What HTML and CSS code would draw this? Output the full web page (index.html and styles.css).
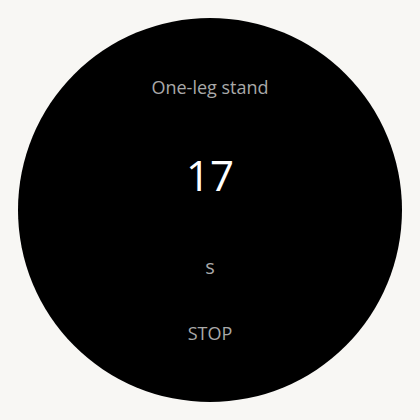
FILE: index.html
```html
<!DOCTYPE html>
<html>
<head>
<meta charset="utf-8">
<link rel="stylesheet" href="styles.css">
</head>
<body>
<div class="screen">
  <div class="watch">
    <div class="title">One-leg stand</div>
    <div class="value">17</div>
    <div class="unit">s</div>
    <div class="action">STOP</div>
  </div>
</div>
</body>
</html>
```
FILE: styles.css
```css
html, body {
  margin: 0;
  padding: 0;
  background: #f8f7f4;
}
.screen {
  width: 420px;
  height: 420px;
  display: flex;
  align-items: center;
  justify-content: center;
}
.watch {
  width: 384px;
  height: 384px;
  border-radius: 50%;
  background: #000;
  display: flex;
  flex-direction: column;
  align-items: center;
  box-sizing: border-box;
  padding-top: 57px;
  font-family: "Open Sans", "Noto Sans", sans-serif;
  color: #a9a9a9;
}
.title {
  font-size: 18px;
  line-height: 24px;
}
.value {
  margin-top: 51px;
  font-size: 42px;
  line-height: 50px;
  color: #fff;
}
.unit {
  margin-top: 55px;
  font-size: 20px;
  line-height: 24px;
}
.action {
  margin-top: 42px;
  font-size: 18px;
  line-height: 24px;
}
```
